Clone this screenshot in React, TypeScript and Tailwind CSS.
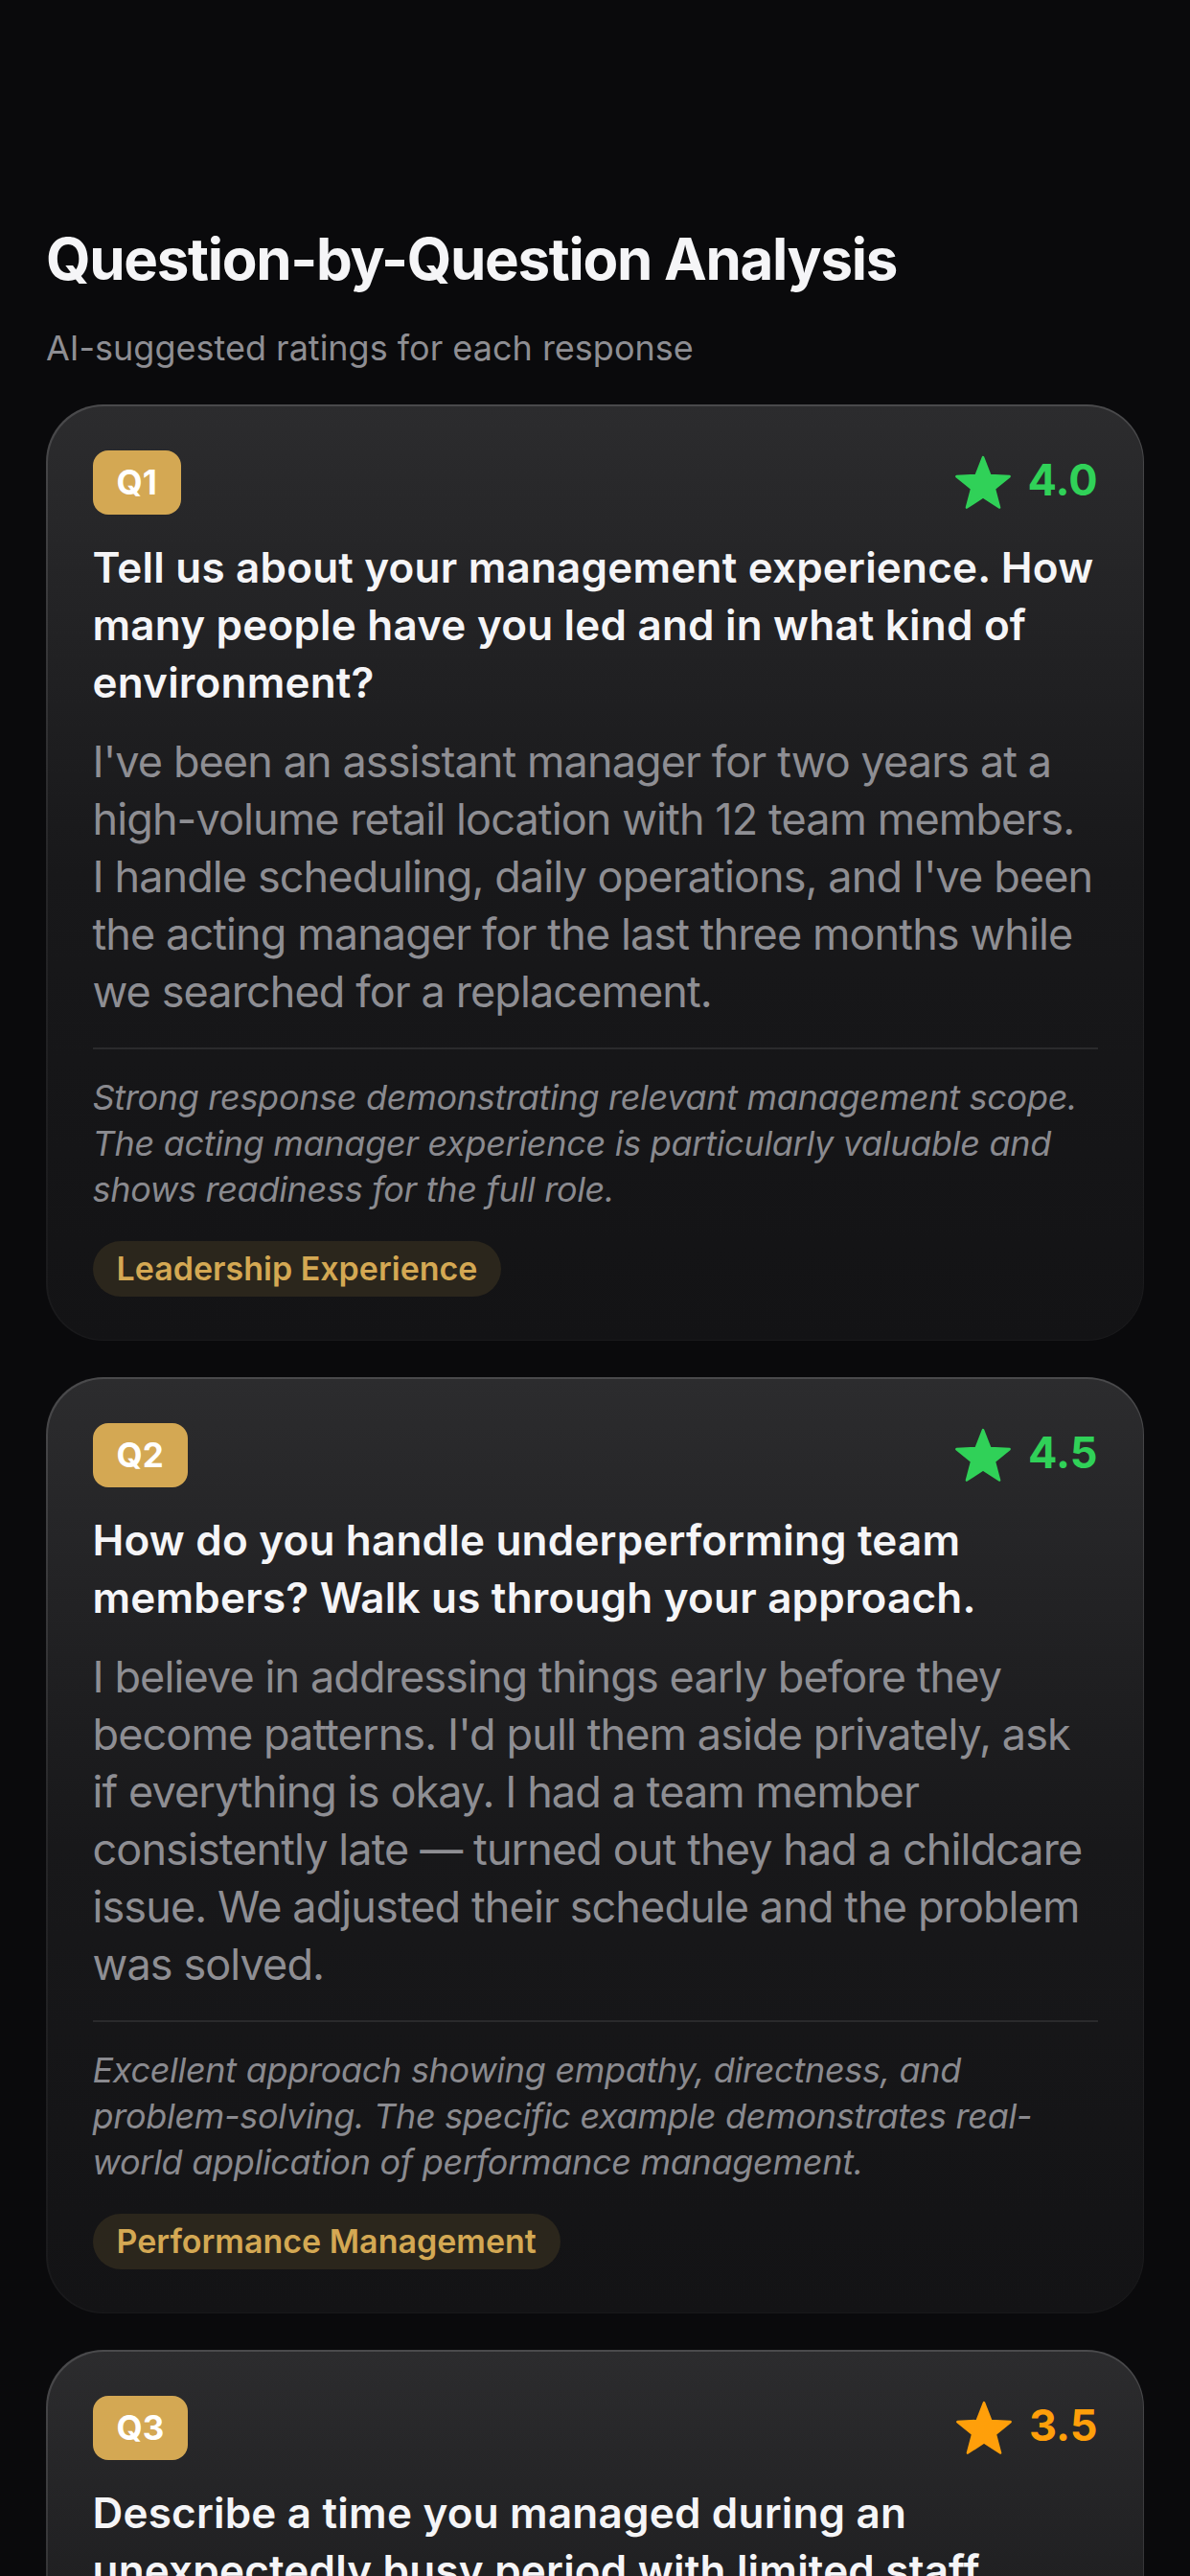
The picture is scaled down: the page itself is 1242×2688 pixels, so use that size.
import React from "react";

type Item = {
  q: string;
  question: string[];
  answer: string[];
  feedback: string[];
  tag: string;
  score: string;
  color: string;
};

const items: Item[] = [
  {
    q: "Q1",
    question: [
      "Tell us about your management experience. How",
      "many people have you led and in what kind of",
      "environment?",
    ],
    answer: [
      "I've been an assistant manager for two years at a",
      "high-volume retail location with 12 team members.",
      "I handle scheduling, daily operations, and I've been",
      "the acting manager for the last three months while",
      "we searched for a replacement.",
    ],
    feedback: [
      "Strong response demonstrating relevant management scope.",
      "The acting manager experience is particularly valuable and",
      "shows readiness for the full role.",
    ],
    tag: "Leadership Experience",
    score: "4.0",
    color: "green",
  },
  {
    q: "Q2",
    question: [
      "How do you handle underperforming team",
      "members? Walk us through your approach.",
    ],
    answer: [
      "I believe in addressing things early before they",
      "become patterns. I'd pull them aside privately, ask",
      "if everything is okay. I had a team member",
      "consistently late — turned out they had a childcare",
      "issue. We adjusted their schedule and the problem",
      "was solved.",
    ],
    feedback: [
      "Excellent approach showing empathy, directness, and",
      "problem-solving. The specific example demonstrates real-",
      "world application of performance management.",
    ],
    tag: "Performance Management",
    score: "4.5",
    color: "green",
  },
  {
    q: "Q3",
    question: [
      "Describe a time you managed during an",
      "unexpectedly busy period with limited staff.",
    ],
    answer: [
      "During the holiday rush two people called out on",
      "a Saturday. I jumped on the register myself, moved",
      "our stocker to the fitting rooms and kept the line",
      "moving. We still hit our sales target for the day.",
    ],
    feedback: [
      "Good practical example of leading by doing. Could be",
      "stronger with more detail on team communication.",
    ],
    tag: "Crisis Management",
    score: "3.5",
    color: "orange",
  },
];

function Lines({ lines }: { lines: string[] }) {
  return (
    <>
      {lines.map((l, i) => (
        <span key={i} className="block whitespace-nowrap">
          {l}
        </span>
      ))}
    </>
  );
}

function Star({ orange }: { orange: boolean }) {
  return (
    <svg
      width="60"
      height="57"
      viewBox="0 0 58 55"
      className={orange ? "text-[#ff9f0a]" : "text-[#30d158]"}
    >
      <path
        d="M29 2 L36.05 20.29 L55.63 21.35 L40.41 33.71 L45.46 52.65 L29 42 L12.54 52.65 L17.59 33.71 L2.37 21.35 L21.95 20.29 Z"
        fill="currentColor"
        stroke="currentColor"
        strokeWidth="2.5"
        strokeLinejoin="round"
      />
    </svg>
  );
}

function Card({ item }: { item: Item }) {
  const orange = item.color === "orange";
  return (
    <div className="rounded-[60px] bg-gradient-to-b from-[#4a4a4c] via-[#262628] to-[#19191b] p-[1.5px]">
      <div className="flex flex-col rounded-[58.5px] bg-gradient-to-b from-[#2c2c2e] via-[#18181a] to-[#131315] px-[47px] pb-[45px] pt-[46px]">
        <div className="flex h-[67px] items-center justify-between">
          <div className="flex h-[67px] items-center rounded-[16px] bg-[#d4a853] px-[25px] text-[35px] font-bold text-white">
            {item.q}
          </div>
          <div className="flex items-center gap-[17px]">
            <Star orange={orange} />
            <span
              className={
                "mb-[6px] text-[45px] font-bold leading-none " +
                (orange ? "text-[#ff9f0a]" : "text-[#30d158]")
              }
            >
              {item.score}
            </span>
          </div>
        </div>
        <p className="mt-[25px] text-[44px] font-semibold leading-[60px] tracking-[0.2px] text-[#f5f5f7]">
          <Lines lines={item.question} />
        </p>
        <p className="mt-[23px] text-[45px] leading-[60px] tracking-[-0.9px] text-[#8e8e93]">
          <Lines lines={item.answer} />
        </p>
        <div className="mt-[28px] h-[2px] bg-[#2a2a2c]" />
        <p className="mt-[26px] text-[36px] italic leading-[48px] tracking-[-0.3px] text-[#8a8a8f]">
          <Lines lines={item.feedback} />
        </p>
        <div className="mt-[30px] flex h-[58px] items-center self-start rounded-full bg-[#2b261c] px-[25px] text-[34px] font-semibold text-[#d4a853]">
          {item.tag}
        </div>
      </div>
    </div>
  );
}

export default function App() {
  return (
    <div
      className="h-[2688px] overflow-hidden bg-[#0a0a0c] px-[48px] pt-[234px]"
      style={{ fontFamily: "Inter, 'Noto Sans', sans-serif" }}
    >
      <h1 className="text-[60px] font-bold leading-[72px] tracking-[-1.3px] text-[#f5f5f7]">
        Question-by-Question Analysis
      </h1>
      <p className="mt-[35px] text-[36px] leading-[44px] text-[#8e8e93]">
        AI-suggested ratings for each response
      </p>
      <div className="mt-[37px] flex flex-col gap-[38px]">
        {items.map((it) => (
          <Card key={it.q} item={it} />
        ))}
      </div>
    </div>
  );
}
